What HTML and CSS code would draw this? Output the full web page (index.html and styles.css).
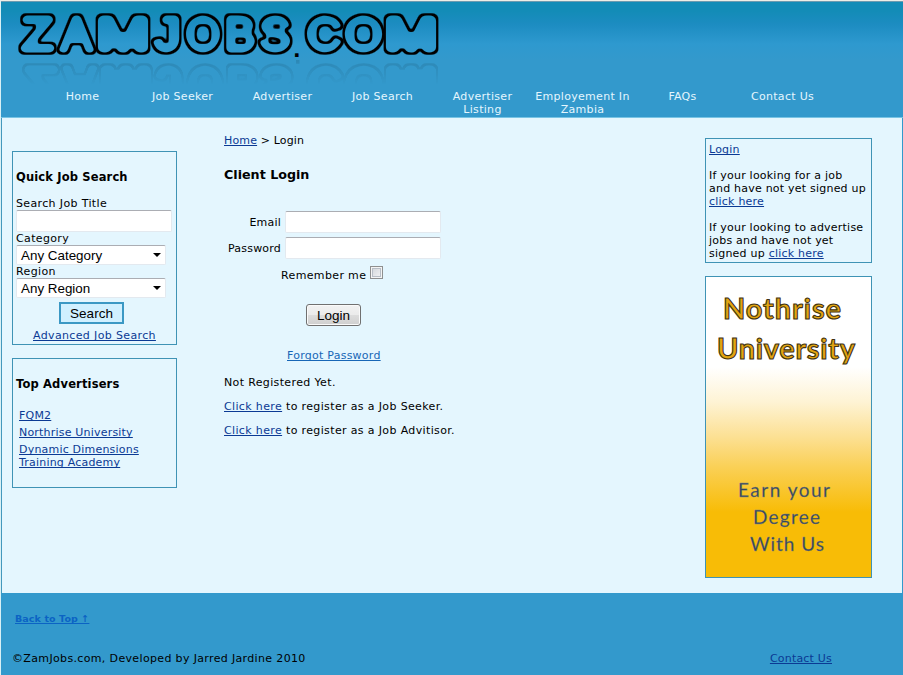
FILE: index.html
```html
<!DOCTYPE html>
<html lang="en">
<head>
<meta charset="utf-8">
<title>ZamJobs.com - Login</title>
<link rel="stylesheet" href="styles.css">
</head>
<body>
<div class="page" id="top">
  <header class="header">
    <svg class="logo" width="460" height="86" viewBox="0 0 460 86" role="img" aria-label="ZAMJOBS.COM">
      <defs>
        <filter id="bubble" filterUnits="userSpaceOnUse" x="0" y="0" width="460" height="62">
          <feMorphology in="SourceAlpha" operator="erode" radius="2" result="inner"/>
          <feGaussianBlur in="inner" stdDeviation="0.8" result="soft"/>
          <feComponentTransfer in="soft" result="core"><feFuncA type="linear" slope="3" intercept="-1.2"/></feComponentTransfer>
          <feGaussianBlur in="SourceAlpha" stdDeviation="0.8" result="edge"/>
          <feComponentTransfer in="edge" result="outer"><feFuncA type="linear" slope="2.500" intercept="-0.7"/></feComponentTransfer>
          <feComposite in="outer" in2="core" operator="out"/>
        </filter>
        <linearGradient id="fade" x1="0" y1="0" x2="0" y2="1">
          <stop offset="0.45" stop-color="#000"/>
          <stop offset="1" stop-color="#fff"/>
        </linearGradient>
        <mask id="reflectMask" maskUnits="userSpaceOnUse" x="0" y="0" width="460" height="62">
          <rect width="460" height="62" fill="url(#fade)"/>
        </mask>
      </defs>
      <g id="wordmark">
        <g class="logo-text">
          <text filter="url(#bubble)" x="21" y="45.500" textLength="31" lengthAdjust="spacingAndGlyphs">Z</text>
          <text filter="url(#bubble)" x="60" y="45.500" textLength="31" lengthAdjust="spacingAndGlyphs">A</text>
          <text filter="url(#bubble)" x="96" y="45.500" textLength="52" lengthAdjust="spacingAndGlyphs">M</text>
          <text filter="url(#bubble)" x="154" y="45.500" textLength="25" lengthAdjust="spacingAndGlyphs">J</text>
          <text filter="url(#bubble)" x="185" y="45.500" textLength="34" lengthAdjust="spacingAndGlyphs">O</text>
          <text filter="url(#bubble)" x="224" y="45.500" textLength="30" lengthAdjust="spacingAndGlyphs">B</text>
          <text filter="url(#bubble)" x="259" y="45.500" textLength="30" lengthAdjust="spacingAndGlyphs">S</text>
          <text filter="url(#bubble)" x="306" y="45.500" textLength="34" lengthAdjust="spacingAndGlyphs">C</text>
          <text filter="url(#bubble)" x="344" y="45.500" textLength="37" lengthAdjust="spacingAndGlyphs">O</text>
          <text filter="url(#bubble)" x="384" y="45.500" textLength="52" lengthAdjust="spacingAndGlyphs">M</text>
        </g>
        <text class="logo-dot" x="292" y="53">.</text>
      </g>
      <g mask="url(#reflectMask)" class="reflection" transform="translate(4 109) scale(0.99 -1)"><use href="#wordmark"/></g>
    </svg>
    <nav class="nav">
      <a href="#">Home</a><a href="#">Job Seeker</a><a href="#">Advertiser</a><a href="#">Job Search</a><a href="#">Advertiser Listing</a><a href="#">Employement In Zambia</a><a href="#">FAQs</a><a href="#">Contact Us</a>
    </nav>
  </header>

  <main class="content">
    <aside class="left">
      <form class="panel search">
        <h2>Quick Job Search</h2>
        <label for="title">Search Job Title</label>
        <input class="field" id="title" type="text">
        <label for="category">Category</label>
        <div class="select" id="category"><span>Any Category</span><i class="arrow"></i></div>
        <label for="region">Region</label>
        <div class="select" id="region"><span>Any Region</span><i class="arrow"></i></div>
        <button class="search-btn" type="button">Search</button>
        <a class="advanced" href="#">Advanced Job Search</a>
      </form>
      <section class="panel advertisers">
        <h2>Top Advertisers</h2>
        <ul>
          <li><a href="#">FQM2</a></li>
          <li><a href="#">Northrise University</a></li>
          <li><a href="#">Dynamic Dimensions<br>Training Academy</a></li>
        </ul>
      </section>
    </aside>

    <section class="center">
      <p class="crumbs"><a href="#">Home</a> &gt; Login</p>
      <h1>Client Login</h1>
      <form class="login">
        <div class="row"><label for="email">Email</label><input class="field" id="email" type="text"></div>
        <div class="row"><label for="password">Password</label><input class="field" id="password" type="password"></div>
        <div class="remember"><label for="remember">Remember me</label><input id="remember" type="checkbox"></div>
        <button class="login-btn" type="button">Login</button>
        <a class="forgot" href="#">Forgot Password</a>
      </form>
      <p class="note">Not Registered Yet.</p>
      <p class="note"><a href="#">Click here</a> to register as a Job Seeker.</p>
      <p class="note"><a href="#">Click here</a> to register as a Job Advitisor.</p>
    </section>

    <aside class="right">
      <section class="panel signup">
        <p><a href="#">Login</a></p>
        <p>If your looking for a job<br>and have not yet signed up<br><a href="#">click here</a></p>
        <p>If your looking to advertise<br>jobs and have not yet<br>signed up <a href="#">click here</a></p>
      </section>
      <section class="banner">
        <svg width="165" height="300" viewBox="0 0 165 300">
          <text class="banner-title" x="17" y="42" textLength="118">Nothrise</text>
          <text class="banner-title" x="11" y="82" textLength="138">University</text>
          <text class="banner-line" x="32" y="220" textLength="92">Earn your</text>
          <text class="banner-line" x="47" y="247" textLength="67">Degree</text>
          <text class="banner-line" x="44" y="274" textLength="74">With Us</text>
        </svg>
      </section>
    </aside>
  </main>

  <footer class="footer">
    <a class="back" href="#top">Back to Top ↑</a>
    <div class="legal"><span>©ZamJobs.com, Developed by Jarred Jardine 2010</span><a href="#">Contact Us</a></div>
  </footer>
</div>
</body>
</html>
```
FILE: styles.css
```css
* { box-sizing: border-box; }
body {
  margin: 0;
  background: #e4f6fe;
  font: 11px/13px Verdana, "DejaVu Sans", sans-serif;
  color: #000;
}
h1, h2, p, ul { margin: 0; padding: 0; }
ul { list-style: none; }
a { color: #0b3a94; text-underline-offset: 1px; text-decoration-skip-ink: none; }
.page {
  width: 903px;
  height: 675px;
  overflow: hidden;
  display: flex;
  flex-direction: column;
  border-top: 1px solid #eeede6;
  border-left: 1px solid #d8f0f5;
}
.header {
  height: 117px;
  flex: none;
  border-top: 1px solid #6c9bb0;
  border-bottom: 1px solid #78c4e4;
  background: linear-gradient(#138cb7 0, #138cb7 9px, #1c8cc1 22px, #2e99cf 42px, #3399cc 58px);
}
.logo { display: block; margin-top: 2px; }
.logo-text {
  font: 46px "Liberation Sans", Arial, sans-serif;
  fill: #000;
  stroke: #000;
  stroke-width: 9.5px;
  stroke-linejoin: round;
}
.logo-dot { font: bold 20px "DejaVu Sans", sans-serif; }
.reflection { opacity: 0.15; }
.nav { display: flex; margin-left: 31.5px; letter-spacing: 0.3px; }
.nav a {
  width: 100px;
  padding: 0 2px;
  text-align: center;
  color: #e4f6fe;
  text-decoration: none;
}
.content {
  height: 475px;
  flex: none;
  display: flex;
  align-items: flex-start;
  border-left: 1px solid #4398bd;
  border-right: 1px solid #3399cc;
}
.panel { border: 1px solid #3f93b5; }
.panel h2 { font-size: 11.5px; line-height: 14px; letter-spacing: 0.15px; }
.left { width: 165px; margin: 33px 0 0 10px; }
.search { height: 194px; padding: 18px 3px 0; display: flex; flex-direction: column; align-items: flex-start; letter-spacing: 0.36px; }
.search h2 { margin-bottom: 13px; }
.field {
  width: 156px;
  height: 22px;
  border: 1px solid #e3e9ef;
  border-top-color: #abadb3;
  border-radius: 2px;
  background: #fff;
}
.select {
  width: 150px;
  height: 20px;
  padding: 0 4px;
  display: flex;
  justify-content: space-between;
  align-items: center;
  border: 1px solid #e3e9ef;
  border-top-color: #abadb3;
  border-radius: 2px;
  background: #fff;
  font: 13.4px "Liberation Sans", sans-serif;
  letter-spacing: 0;
}
.arrow { border: 4px solid transparent; border-top-color: #000; border-bottom: 0; }
.search-btn {
  width: 65px;
  height: 22px;
  margin: 4px 0 5px 43px;
  padding: 0;
  border: 2px solid #3b98c4;
  background: #d0f0ff;
  font: 13.5px "Liberation Sans", sans-serif;
}
.advanced { margin-left: 17px; }
.advertisers { height: 130px; margin-top: 13px; padding: 18px 3px 0; letter-spacing: 0.2px; }
.advertisers ul { padding: 18px 0 0 3px; display: flex; flex-direction: column; gap: 4px; }
.center { width: 300px; margin: 16px 0 0 47px; letter-spacing: 0.36px; }
.crumbs { letter-spacing: 0.15px; }
.center h1 { margin-top: 20px; font-size: 12.7px; line-height: 16px; letter-spacing: 0; }
.login { margin-top: 28px; display: flex; flex-direction: column; align-items: flex-start; }
.row { display: flex; align-items: center; gap: 4px; margin-bottom: 4px; letter-spacing: 0.2px; }
.row label { width: 57px; text-align: right; }
.remember { display: flex; align-items: flex-end; margin: 3px 0 0 57px; height: 16px; }
.remember input {
  appearance: none;
  width: 13px;
  height: 13px;
  margin: 0 0 3px 4px;
  border: 1px solid #8e8f8f;
  box-shadow: inset 0 0 0 1px #f4f4f4, inset 0 0 0 2px #b8bec6;
  background: linear-gradient(135deg, #cfd3d8, #f6f6f6);
}
.login-btn {
  width: 55px;
  height: 22px;
  margin: 22px 0 0 82px;
  padding: 0;
  border: 1px solid #707070;
  border-radius: 3px;
  box-shadow: inset 0 0 0 1px #fafafa;
  background: linear-gradient(#f2f2f2, #ebebeb 50%, #dddddd 50%, #cfcfcf);
  font: 13.5px "Liberation Sans", sans-serif;
}
.forgot { margin: 23px 0 14px 63px; color: #1766b6; letter-spacing: 0.25px; }
.note { margin-bottom: 11px; }
.right { width: 167px; margin: 20px 0 0 181px; }
.signup { height: 125px; padding: 4px 3px; white-space: nowrap; letter-spacing: 0.22px; }
.signup p { margin-bottom: 13px; }
.banner {
  height: 302px;
  margin-top: 13px;
  border: 1px solid #3f93b5;
  background: linear-gradient(#fff 0, #fff 90px, #fef3d4 125px, #fce093 160px, #fad056 190px, #f8bc06 235px);
}
.banner svg { display: block; }
.banner-title {
  font: bold 29px Lato, sans-serif;
  fill: #e3a512;
  stroke: #3f3211;
  stroke-width: 1.1px;
}
.banner-line {
  font: 19px Lato, sans-serif;
  fill: #34445c;
  stroke: #8b8c7c;
  stroke-width: 0.3px;
}
.footer { flex: 1; padding: 19px 0 0 14px; background: #3399cc; }
.back { font-size: 9.5px; font-weight: bold; color: #0b63c4; letter-spacing: 0.1px; }
.legal { display: flex; margin: 27px 71px 0 -3px; justify-content: space-between; letter-spacing: 0.35px; }
.legal a { letter-spacing: 0.2px; }
```
